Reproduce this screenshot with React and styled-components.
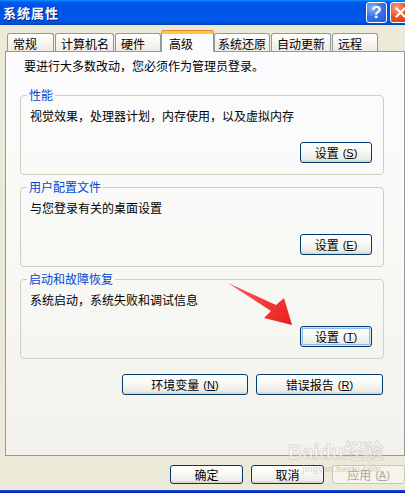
import React from "react";
import styled, { createGlobalStyle } from "styled-components";

const GlobalStyle = createGlobalStyle`
  html, body {
    margin: 0;
    padding: 0;
  }
  body {
    width: 405px;
    height: 493px;
    overflow: hidden;
    background: #ece9d8;
    font-family: "Noto Sans CJK SC", "Liberation Sans", sans-serif;
    font-size: 12px;
    color: #000;
  }
`;

const Window = styled.div`
  position: relative;
  width: 405px;
  height: 493px;
  display: flex;
  flex-direction: column;
  background: #ece9d8;
  overflow: hidden;
`;

const TitleBar = styled.div`
  height: 25px;
  flex-shrink: 0;
  display: flex;
  align-items: center;
  padding-left: 3px;
  overflow: hidden;
  background: linear-gradient(
    180deg,
    #0997ff 0%,
    #0058ee 8%,
    #0053e7 20%,
    #0054e3 50%,
    #0058ec 75%,
    #0052d8 90%,
    #0042b8 100%
  );
`;

const Title = styled.span`
  color: #fff;
  font-weight: bold;
  font-size: 13px;
  line-height: 16px;
  letter-spacing: 1px;
  text-shadow: 1px 1px 0 #0a1e8c;
`;

const Controls = styled.div`
  margin-left: auto;
  margin-right: -6px;
  display: flex;
  gap: 3px;
`;

const CaptionButton = styled.div`
  width: 21px;
  height: 21px;
  box-sizing: border-box;
  border: 1px solid #fff;
  border-radius: 3px;
  display: flex;
  align-items: center;
  justify-content: center;
  color: #fff;
  font-family: "Liberation Sans", sans-serif;
  font-weight: bold;
  font-size: 17px;
  background: ${(p) =>
    p.$close
      ? "radial-gradient(circle at 30% 25%, #f2a08a 0%, #e4572f 45%, #cc3a14 100%)"
      : "radial-gradient(circle at 30% 25%, #8fb4f7 0%, #3b74ea 45%, #2255d8 100%)"};
`;

const Body = styled.div`
  flex: 1;
  display: flex;
  flex-direction: column;
  padding-top: 6px;
`;

const TabStrip = styled.div`
  height: 20px;
  display: flex;
  align-items: flex-end;
  gap: 1px;
  padding-left: 7px;
`;

const Tab = styled.div`
  position: relative;
  box-sizing: border-box;
  width: ${(p) => p.$w}px;
  height: ${(p) => (p.$active ? 21 : 18)}px;
  margin: ${(p) => (p.$active ? "0 -1px -1px -1px" : "0")};
  z-index: ${(p) => (p.$active ? 1 : 0)};
  padding-left: ${(p) => (p.$active ? 7 : p.$pad ?? 5)}px;
  padding-top: 3px;
  border: 1px solid #919b9c;
  border-bottom: none;
  border-top: ${(p) => (p.$active ? "3px solid #ffc73c" : "1px solid #919b9c")};
  border-radius: 3px 3px 0 0;
  line-height: 14px;
  white-space: nowrap;
  background: ${(p) =>
    p.$active ? "#fcfcfe" : "linear-gradient(180deg, #ffffff 0%, #f6f5f1 50%, #ecebe6 100%)"};
  box-shadow: ${(p) => (p.$active ? "0 -1px 0 #e68b2c" : "none")};
`;

const Panel = styled.div`
  margin-left: 5px;
  width: 400px;
  height: 405px;
  box-sizing: border-box;
  border: 1px solid #919b9c;
  background: linear-gradient(180deg, #fcfcfe 0%, #f8f8f5 50%, #f3f2ec 100%);
  padding: 7px 20px 0 14px;
  display: flex;
  flex-direction: column;
`;

const Intro = styled.div`
  line-height: 14px;
  margin-left: 4px;
  margin-bottom: 15px;
`;

const Group = styled.fieldset`
  margin: 0 0 5px 0;
  min-width: 0;
  border: 1px solid #d0d0bf;
  border-radius: 4px;
  padding: 0 11px 11px 9px;
  display: flex;
  flex-direction: column;
`;

const Legend = styled.legend`
  color: #0046d5;
  line-height: 14px;
  padding: 0 2px;
  margin-left: -3px;
`;

const Desc = styled.div`
  line-height: 14px;
  margin-top: 7px;
`;

const ButtonRow = styled.div`
  display: flex;
  justify-content: flex-end;
  gap: 8px;
  margin-top: ${(p) => p.$top || 0}px;
  padding-right: ${(p) => p.$right || 0}px;
`;

const Button = styled.div`
  box-sizing: border-box;
  width: ${(p) => p.$w}px;
  height: ${(p) => p.$h || 21}px;
  border: 1px solid ${(p) => (p.$disabled ? "#c9c7ba" : "#003c74")};
  border-radius: 3px;
  display: flex;
  align-items: center;
  justify-content: center;
  line-height: 14px;
  color: ${(p) => (p.$disabled ? "#aca899" : "#000")};
  background: ${(p) =>
    p.$disabled
      ? "#f5f4ea"
      : "linear-gradient(180deg, #ffffff 0%, #f8f8f4 45%, #ecebe4 85%, #d6d0c5 100%)"};
  box-shadow: ${(p) =>
    p.$focus ? "inset 0 0 0 1px #cee7ff, inset 0 0 0 2px #98b8ea" : "none"};

  u {
    text-decoration: underline;
    text-underline-offset: 1px;
  }
`;

const Paren = styled.span`
  margin-left: 4px;
  font-family: "Liberation Sans", sans-serif;
  font-size: 11px;
`;

const Footer = styled.div`
  display: flex;
  justify-content: flex-end;
  gap: 8px;
  margin-top: 9px;
`;

const BottomFrame = styled.div`
  margin-top: auto;
  height: 3px;
  background: linear-gradient(180deg, #1a47d9 0%, #0831c8 60%, #0019a8 100%);
`;

const Overlay = styled.svg`
  position: absolute;
  left: 0;
  top: 0;
  pointer-events: none;
`;

const Watermark = styled.div`
  position: absolute;
  left: 288px;
  top: 441px;
  display: flex;
  flex-direction: column;
  align-items: flex-start;
  pointer-events: none;
  color: rgba(255, 255, 255, 0.55);
  -webkit-text-stroke: 1px rgba(190, 190, 185, 0.5);
  font-family: "Liberation Sans", "Noto Sans CJK SC", sans-serif;
  font-weight: bold;
`;

const MarkBig = styled.span`
  font-size: 20px;
  line-height: 23px;
`;

const MarkSmall = styled.span`
  font-size: 9px;
  line-height: 11px;
  margin-left: 14px;
  -webkit-text-stroke: 0;
  color: rgba(170, 170, 165, 0.4);
`;

const tabs = [
  { label: "常规", w: 47 },
  { label: "计算机名", w: 59 },
  { label: "硬件", w: 46 },
  { label: "高级", w: 53, active: true },
  { label: "系统还原", w: 56, pad: 3 },
  { label: "自动更新", w: 60 },
  { label: "远程", w: 46 },
];

const groups = [
  { legend: "性能", desc: "视觉效果，处理器计划，内存使用，以及虚拟内存", key: "S" },
  { legend: "用户配置文件", desc: "与您登录有关的桌面设置", key: "E" },
  { legend: "启动和故障恢复", desc: "系统启动，系统失败和调试信息", key: "T", focus: true },
];

function Label({ text, hotkey }) {
  return (
    <>
      {text}
      {hotkey && (
        <Paren>
          (<u>{hotkey}</u>)
        </Paren>
      )}
    </>
  );
}

export default function App() {
  return (
    <Window>
      <GlobalStyle />
      <TitleBar>
        <Title>系统属性</Title>
        <Controls>
          <CaptionButton>?</CaptionButton>
          <CaptionButton $close>
            <svg width="11" height="11" viewBox="0 0 11 11">
              <path d="M1.5 1.5 L9.5 9.5 M9.5 1.5 L1.5 9.5" stroke="#fff" strokeWidth="2.2" strokeLinecap="round" />
            </svg>
          </CaptionButton>
        </Controls>
      </TitleBar>

      <Body>
        <TabStrip>
          {tabs.map((t) => (
            <Tab key={t.label} $w={t.w} $active={t.active} $pad={t.pad}>
              {t.label}
            </Tab>
          ))}
        </TabStrip>

        <Panel>
          <Intro>要进行大多数改动，您必须作为管理员登录。</Intro>
          {groups.map((g) => (
            <Group key={g.legend}>
              <Legend>{g.legend}</Legend>
              <Desc>{g.desc}</Desc>
              <ButtonRow $top={19}>
                <Button $w={72} $focus={g.focus}>
                  <Label text="设置" hotkey={g.key} />
                </Button>
              </ButtonRow>
            </Group>
          ))}
          <ButtonRow $top={10} $right={1}>
            <Button $w={126}>
              <Label text="环境变量" hotkey="N" />
            </Button>
            <Button $w={127}>
              <Label text="错误报告" hotkey="R" />
            </Button>
          </ButtonRow>
        </Panel>

        <Footer>
          <Button $w={73} $h={19}>确定</Button>
          <Button $w={73} $h={19}>取消</Button>
          <Button $w={73} $h={19} $disabled>
            <Label text="应用" hotkey="A" />
          </Button>
        </Footer>

        <BottomFrame />
      </Body>

      <Watermark>
        <MarkBig>Baidu经验</MarkBig>
        <MarkSmall>jingyan.baidu.com</MarkSmall>
      </Watermark>

      <Overlay width="405" height="493" viewBox="0 0 405 493">
        <defs>
          <linearGradient id="arrowFill" x1="0" y1="0" x2="1" y2="1">
            <stop offset="0" stopColor="#ff5a5a" />
            <stop offset="1" stopColor="#e81e1e" />
          </linearGradient>
        </defs>
        <polygon
          points="228,283 276,305 284,298 292,325 264,318 271,311"
          fill="url(#arrowFill)"
        />
      </Overlay>
    </Window>
  );
}
